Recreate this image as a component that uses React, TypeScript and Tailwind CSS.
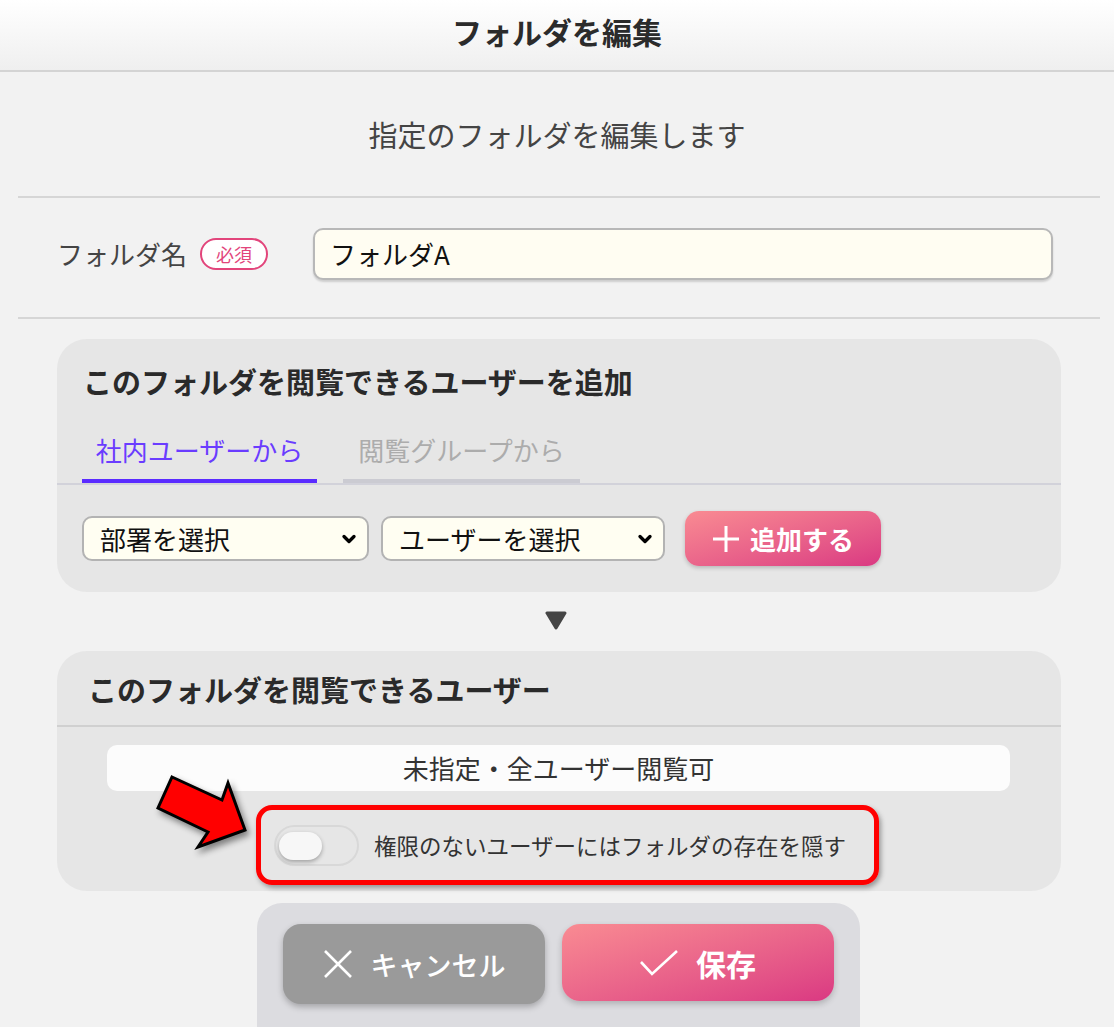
import { ChevronDown } from 'lucide-react';

function Toggle() {
  return (
    <div className="relative h-[41px] w-[85px] shrink-0 rounded-full border-2 border-[#d8d8d8] bg-[#e6e6e6]">
      <div className="absolute left-[3px] top-[5px] h-[28px] w-[43px] rounded-full bg-[#f7f7f7] shadow-[0_2px_4px_rgba(0,0,0,0.3)]" />
    </div>
  );
}

function Select({ label, width }: { label: string; width: string }) {
  return (
    <div className={`relative flex h-[45px] ${width} items-center rounded-[10px] border-2 border-[#b3b3b3] bg-[#fffef2] pl-[16px] text-[26px] leading-none text-[#111]`}>
      {label}
      <ChevronDown size={20} strokeWidth={4} className="absolute right-[8px] top-[11px] text-black" />
    </div>
  );
}

export default function App() {
  return (
    <div className="relative min-h-screen overflow-hidden bg-[#f2f2f2] font-['Noto_Sans_CJK_JP',sans-serif] text-[#333]">
      {/* header */}
      <div className="flex h-[72px] items-center justify-center border-b-2 border-[#d4d4d4] bg-gradient-to-b from-white to-[#efefef] pb-[8px]">
        <h1 className="text-[30px] font-bold leading-none text-[#2b2b2b]">フォルダを編集</h1>
      </div>

      <p className="pt-[42px] pb-[42px] text-center text-[29px] leading-[40px] text-[#444]">指定のフォルダを編集します</p>
      <div className="ml-[18px] mr-[14px] border-t-2 border-[#d6d6d6]" />

      {/* folder name */}
      <div className="flex items-center pl-[57px] pr-[61px] pt-[30px] pb-[37px]">
        <div className="flex w-[256px] items-center gap-[13px]">
          <span className="text-[26px] leading-none text-[#444]">フォルダ名</span>
          <span className="flex h-[32px] w-[68px] items-center justify-center rounded-full border-2 border-[#e2457b] bg-white text-[18px] leading-none text-[#e2457b]">必須</span>
        </div>
        <div className="flex h-[52px] flex-1 items-center rounded-[10px] border-2 border-[#b8b8b8] bg-[#fffdf2] pl-[15px] text-[26px] leading-none text-[#111] shadow-[0_2px_2px_rgba(0,0,0,0.15)]">
          フォルダA
        </div>
      </div>
      <div className="ml-[18px] mr-[14px] border-t-2 border-[#d6d6d6]" />

      {/* add users panel */}
      <div className="ml-[57px] mr-[53px] mt-[20px] rounded-[30px] bg-[#e6e6e6]">
        <h2 className="pl-[26px] pt-[22px] text-[29px] font-bold leading-[40px] text-[#2a2a2a]">このフォルダを閲覧できるユーザーを追加</h2>
        <div className="flex gap-[26px] border-b-2 border-[#d2d2da] pl-[25px] pt-[30px]">
          <div className="w-[235px] border-b-4 border-[#5a2bff] pb-[10px] text-center text-[26px] leading-[38px] text-[#6a3cff]">社内ユーザーから</div>
          <div className="w-[237px] border-b-4 border-[#cbcbd2] pb-[10px] text-center text-[26px] leading-[38px] text-[#acacac]">閲覧グループから</div>
        </div>
        <div className="flex items-center gap-[12px] pl-[25px] pt-[26px] pb-[26px]">
          <Select label="部署を選択" width="w-[287px]" />
          <Select label="ユーザーを選択" width="w-[284px]" />
          <button className="ml-[8px] flex h-[55px] w-[196px] items-center justify-center gap-[10px] rounded-[14px] bg-gradient-to-br from-[#f98b92] to-[#da3882] text-[26px] font-bold leading-none text-white shadow-[0_2px_4px_rgba(0,0,0,0.2)]">
            <svg width="28" height="28" viewBox="0 0 28 28" stroke="white" strokeWidth="3" fill="none">
              <path d="M14 1v26M1 14h26" />
            </svg>
            追加する
          </button>
        </div>
      </div>

      {/* down triangle */}
      <div className="flex justify-center pt-[19px] pb-[21px]">
        <svg width="24" height="19" viewBox="0 0 24 19" className="ml-[-2px]">
          <path d="M3 2h18L12 17z" fill="#454545" stroke="#454545" strokeWidth="3" strokeLinejoin="round" />
        </svg>
      </div>

      {/* viewers panel */}
      <div className="ml-[57px] mr-[53px] rounded-[30px] bg-[#e6e6e6] pb-[6px]">
        <h2 className="border-b-2 border-[#d0d0d0] pl-[31px] pt-[18px] pb-[16px] text-[29px] font-bold leading-[40px] text-[#2a2a2a]">このフォルダを閲覧できるユーザー</h2>
        <div className="ml-[50px] mr-[51px] mt-[18px] flex h-[46px] items-center justify-center rounded-[10px] bg-[#fcfcfc] text-[26px] leading-none text-[#333]">
          未指定・全ユーザー閲覧可
        </div>
        <div className="pl-[199px] pt-[14px]">
          <div className="inline-flex h-[80px] items-center gap-[15px] rounded-[16px] border-[5px] border-[#ff0000] pl-[13px] pr-[28px] shadow-[2px_3px_5px_rgba(0,0,0,0.35)]">
            <Toggle />
            <span className="text-[22.5px] leading-none text-[#333]">権限のないユーザーにはフォルダの存在を隠す</span>
          </div>
        </div>
      </div>

      {/* footer buttons */}
      <div className="ml-[257px] mt-[12px] flex h-[140px] w-[603px] items-start gap-[17px] rounded-t-[25px] bg-[#dcdce0] pl-[26px] pt-[21px]">
        <button className="flex h-[80px] w-[262px] items-center justify-center gap-[18px] rounded-[18px] bg-[#9a9a9a] text-[27px] font-medium leading-none text-white shadow-[0_3px_6px_rgba(0,0,0,0.25)]">
          <svg width="30" height="30" viewBox="0 0 30 30" stroke="white" strokeWidth="2.6" fill="none">
            <path d="M2 2l26 26M28 2L2 28" />
          </svg>
          キャンセル
        </button>
        <button className="flex h-[77px] w-[272px] items-center justify-center gap-[18px] rounded-[18px] bg-gradient-to-br from-[#f98b92] to-[#da3882] text-[30px] font-bold leading-none text-white shadow-[0_3px_6px_rgba(0,0,0,0.2)]">
          <svg width="38" height="26" viewBox="0 0 38 26" stroke="white" strokeWidth="2.6" fill="none">
            <path d="M1 12l11 12L37 1" />
          </svg>
          保存
        </button>
      </div>

      {/* red annotation arrow */}
      <svg className="pointer-events-none absolute left-[140px] top-[760px]" width="130" height="100" viewBox="0 0 130 100" style={{ filter: 'drop-shadow(3px 4px 3px rgba(0,0,0,0.45))' }}>
        <polygon
          points="32,17 82,40 88,23 105,70 58,87 68,72 18,48"
          fill="#ff0000"
          stroke="#000"
          strokeWidth="3"
          strokeLinejoin="miter"
        />
      </svg>
    </div>
  );
}
